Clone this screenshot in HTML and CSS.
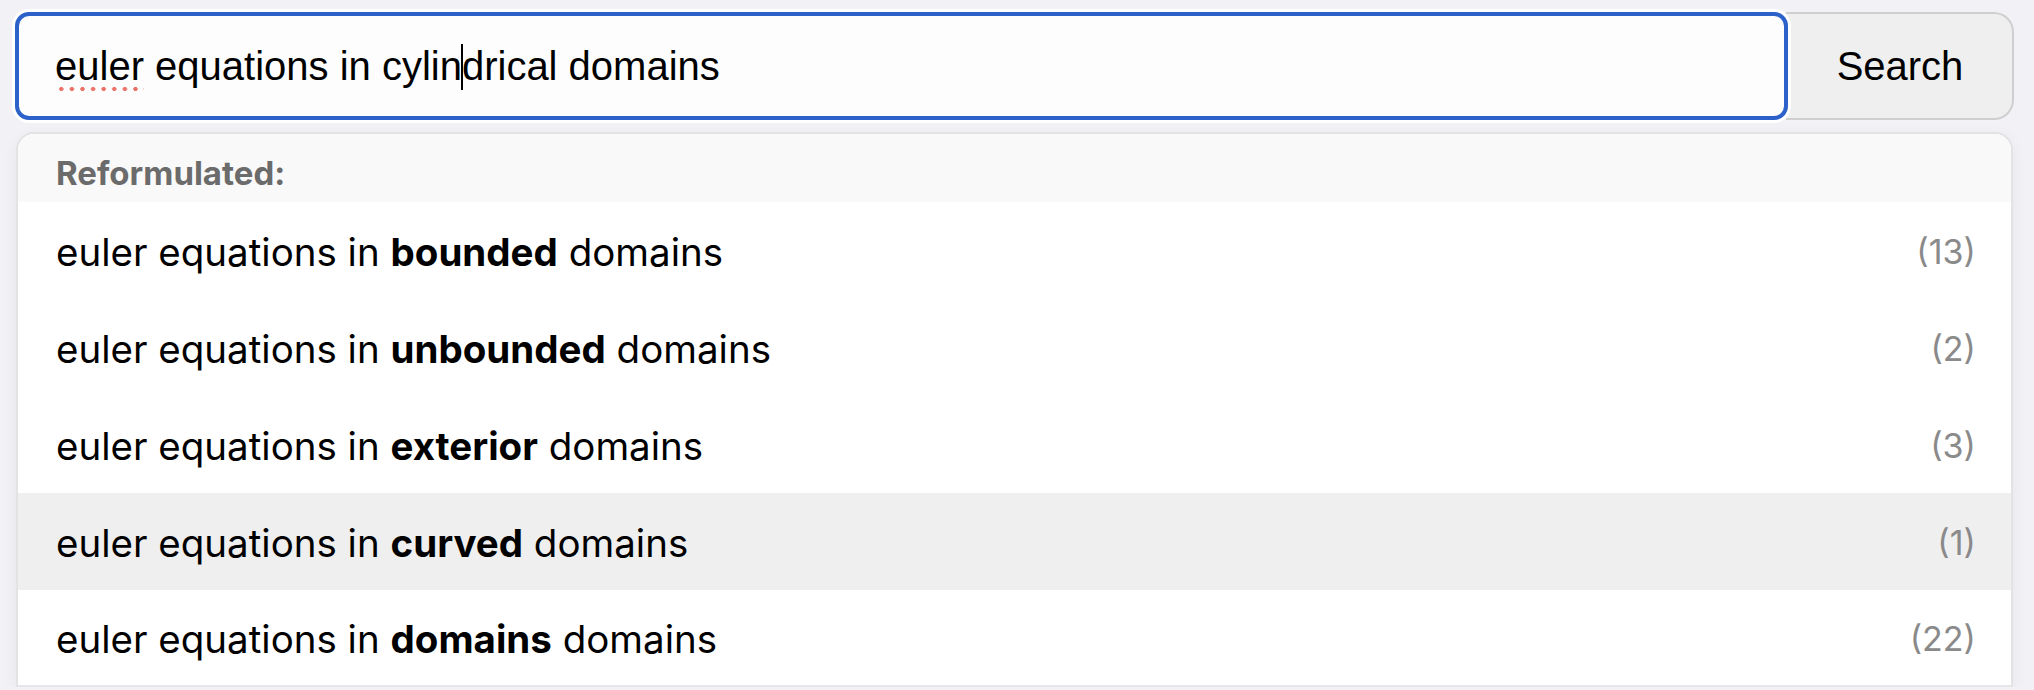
FILE: index.html
```html
<!DOCTYPE html>
<html lang="en">

<head>
    <meta charset="UTF-8">
    <meta name="viewport" content="width=device-width, initial-scale=1.0">
    <title>Search</title>
    <link rel="stylesheet" href="styles.css">
</head>

<body>

    <div class="page">
        <!-- search bar -->
        <form class="search-form" onsubmit="return false">
            <div class="search-box" role="textbox">
                <span class="search-text"><span class="misspelled">euler</span> equations in cylin<span class="caret"></span>drical domains</span>
            </div>
            <button class="search-btn" type="submit">Search</button>
        </form>

        <!-- suggestions -->
        <div class="suggest">
            <div class="suggest-head">Reformulated:</div>
            <ul class="suggest-list">
                <li><span>euler equations in <b>bounded</b> domains</span><span class="count">(13)</span></li>
                <li><span>euler equations in <b>unbounded</b> domains</span><span class="count">(2)</span></li>
                <li><span>euler equations in <b>exterior</b> domains</span><span class="count">(3)</span></li>
                <li class="active"><span>euler equations in <b>curved</b> domains</span><span class="count">(1)</span></li>
                <li><span>euler equations in <b>domains</b> domains</span><span class="count">(22)</span></li>
            </ul>
        </div>
    </div>

</body>

</html>
```

FILE: styles.css
```css
* {
    padding: 0;
    margin: 0;
    list-style: none;
    box-sizing: border-box;
}

body {
    background-color: #f2f2f6;
    overflow: hidden;
}

.page {
    padding: 12px 20px 0 15px;
}

/* 搜索栏 */
.search-form {
    display: flex;
    height: 108px;
}

.search-box {
    flex: 1;
    display: flex;
    align-items: center;
    padding: 0 36px;
    background-color: #fdfdfd;
    border: 4px solid #2b61c9;
    border-radius: 14px;
    box-shadow: 0 0 0 3px #fff;
    font-family: "Liberation Sans", Arial, sans-serif;
    font-size: 40px;
    color: #000;
    position: relative;
    z-index: 1;
}

.search-text {
    white-space: pre;
    line-height: 48px;
}

.misspelled {
    position: relative;
}

.misspelled::after {
    content: "";
    position: absolute;
    left: 1px;
    right: 0;
    bottom: -3px;
    height: 4px;
    background: radial-gradient(circle, #ec7166 1.9px, transparent 2.3px) 0 0 / 10.6px 4px repeat-x;
}

.caret {
    display: inline-block;
    width: 2px;
    height: 46px;
    margin: 0 -1px;
    background-color: #000;
    vertical-align: -10px;
}

.search-btn {
    width: 228px;
    margin-left: -2px;
    background-color: #efefef;
    border: 2px solid #cfcfcf;
    border-left: none;
    border-radius: 0 20px 20px 0;
    font-family: "Liberation Sans", Arial, sans-serif;
    font-size: 40px;
    color: #000;
    padding-left: 2px;
}

/* 下拉建议 */
.suggest {
    margin: 12px 1px 0 1px;
    background-color: #fff;
    border: 2px solid #e3e3e6;
    border-bottom: none;
    border-radius: 18px 18px 0 0;
    box-shadow: 0 4px 16px rgba(0, 0, 0, 0.05);
    font-family: Inter, "Noto Sans", sans-serif;
    overflow: hidden;
}

.suggest-head {
    height: 68px;
    display: flex;
    align-items: center;
    padding: 10px 38px 0;
    background-color: #f9f9f9;
    font-size: 33px;
    font-weight: 700;
    color: #6b6b6b;
}

.suggest-list li {
    height: 97px;
    display: flex;
    align-items: center;
    justify-content: space-between;
    padding: 2px 35px 0 38px;
    font-size: 38.5px;
    color: #000;
}

.suggest-list li.active {
    background-color: #efefef;
}

.suggest-list li:last-child {
    border-bottom: 2px solid #e6e6e9;
}

.suggest-list b {
    font-weight: 700;
}

.count {
    font-size: 34px;
    color: #8a8a8a;
}
```
